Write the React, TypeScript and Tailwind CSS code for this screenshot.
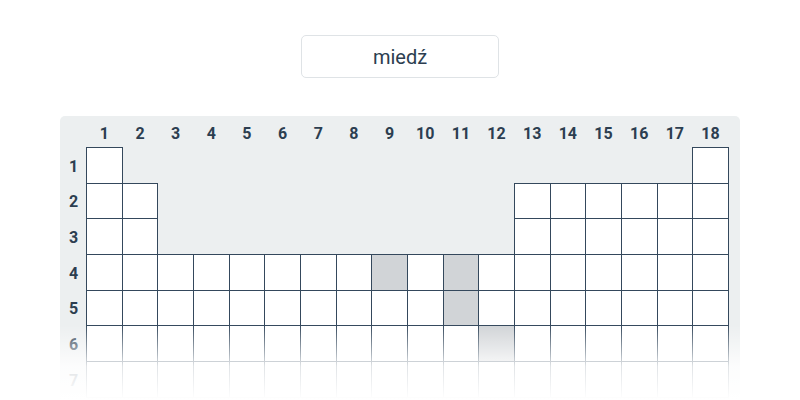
import React from 'react';

// which columns exist in each period (1-based)
const ROWS: number[][] = [
  [1, 18],
  [1, 2, 13, 14, 15, 16, 17, 18],
  [1, 2, 13, 14, 15, 16, 17, 18],
  Array.from({ length: 18 }, (_, i) => i + 1),
  Array.from({ length: 18 }, (_, i) => i + 1),
  Array.from({ length: 18 }, (_, i) => i + 1),
  Array.from({ length: 18 }, (_, i) => i + 1),
];

// marked (already guessed) cells, "row-col"
const MARKED = new Set(['4-9', '4-11', '5-11', '6-12']);

export default function App() {
  return (
    <div className="relative flex h-[400px] w-full flex-col items-center overflow-hidden bg-white font-['Roboto',sans-serif] text-[#2c3e50]">
      {/* Answer box */}
      <div className="mt-[35px] flex h-[43px] w-[198px] shrink-0 items-center justify-center rounded-[5px] border border-[#dfe3e6] text-[20px]">
        miedź
      </div>

      {/* Table panel */}
      <div className="mt-[38px] w-[680px] shrink-0 rounded-[5px] bg-[#eceff0] pb-4">
        <div className="grid grid-cols-[26px_repeat(18,35.67px)] grid-rows-[31px_repeat(7,35.67px)]">
          <div />
          {Array.from({ length: 18 }, (_, i) => (
            <div key={i} className="flex items-center justify-center pl-[1px] pt-[4px] text-[16px] font-bold">
              {i + 1}
            </div>
          ))}
          {ROWS.map((cols, r) => (
            <React.Fragment key={r}>
              <div
                className="flex items-center justify-center pl-[1px] pt-[4px] text-[16px] font-bold"
                style={{ gridRow: r + 2, gridColumn: 1 }}
              >
                {r + 1}
              </div>
              {cols.map((c) => (
                <div
                  key={c}
                  className={`h-[36.67px] w-[36.67px] border border-[#34485c] ${
                    MARKED.has(`${r + 1}-${c}`) ? 'bg-[#d1d4d7]' : 'bg-white'
                  }`}
                  style={{ gridRow: r + 2, gridColumn: c + 1 }}
                />
              ))}
            </React.Fragment>
          ))}
        </div>
      </div>

      {/* bottom fade */}
      <div className="pointer-events-none absolute inset-x-0 top-[325px] h-[75px] bg-gradient-to-b from-white/0 via-white/85 via-[55%] to-white" />
    </div>
  );
}
